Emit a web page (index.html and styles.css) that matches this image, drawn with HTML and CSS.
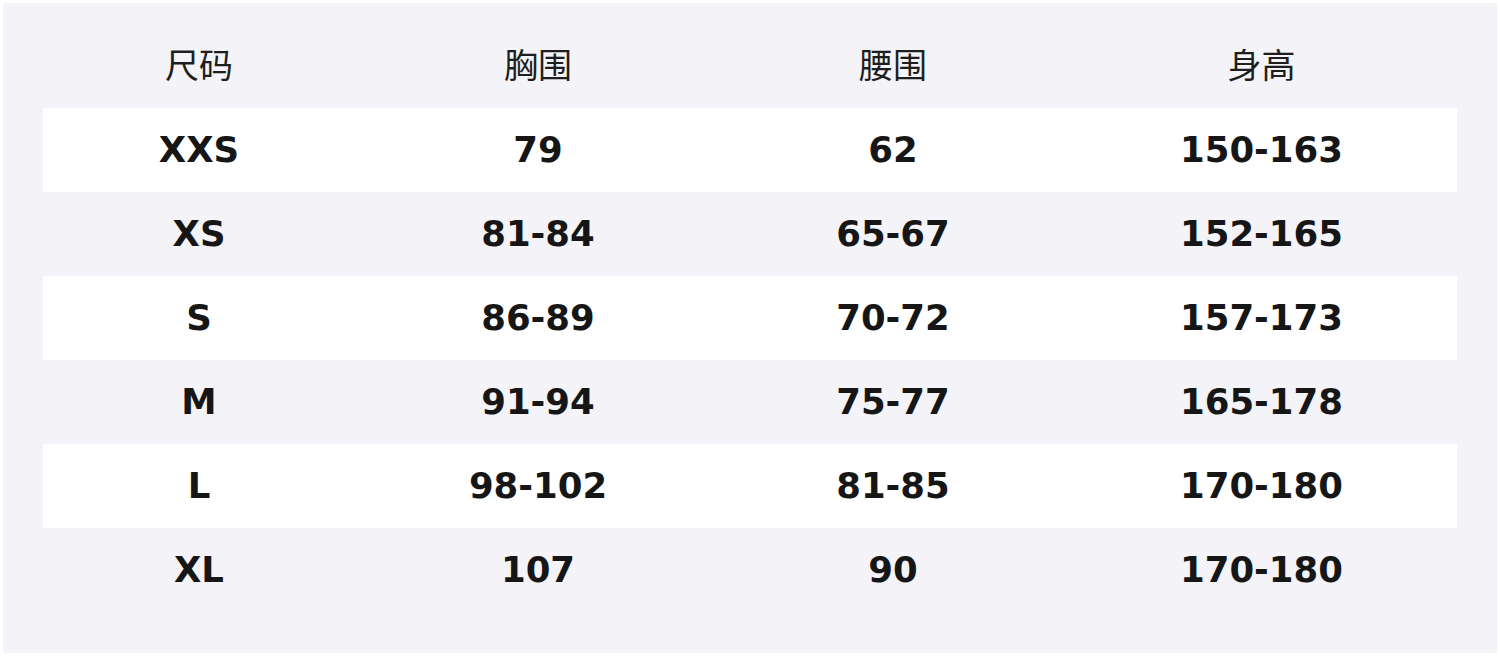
FILE: index.html
```html
<!DOCTYPE html>
<html lang="zh">
<head>
<meta charset="utf-8">
<link rel="stylesheet" href="styles.css">
</head>
<body>
<div class="panel">
  <div class="table">
    <div class="row head"><div>尺码</div><div>胸围</div><div>腰围</div><div>身高</div></div>
    <div class="row alt"><div>XXS</div><div>79</div><div>62</div><div>150-163</div></div>
    <div class="row"><div>XS</div><div>81-84</div><div>65-67</div><div>152-165</div></div>
    <div class="row alt"><div>S</div><div>86-89</div><div>70-72</div><div>157-173</div></div>
    <div class="row"><div>M</div><div>91-94</div><div>75-77</div><div>165-178</div></div>
    <div class="row alt"><div>L</div><div>98-102</div><div>81-85</div><div>170-180</div></div>
    <div class="row"><div>XL</div><div>107</div><div>90</div><div>170-180</div></div>
  </div>
</div>
</body>
</html>
```
FILE: styles.css
```css
html, body { margin: 0; padding: 0; background: #ffffff; }
body { padding: 3px; width: 1500px; height: 656px; box-sizing: border-box; }
.panel {
  background: #f3f3f8;
  height: 650px;
  box-sizing: border-box;
  padding: 21px 40px 41px 40px;
}
.table { display: flex; flex-direction: column; }
.row {
  display: grid;
  grid-template-columns: 312px 366px 344px 393px;
  height: 84px;
  align-items: center;
  text-align: center;
  font-family: "DejaVu Sans", sans-serif;
  font-weight: bold;
  font-size: 35.5px;
  color: #161616;
  box-sizing: border-box;
  padding-bottom: 1px;
}
.row.alt { background: #ffffff; }
.row.head {
  font-family: "Noto Sans CJK SC", "Noto Sans", sans-serif;
  font-weight: normal;
  font-size: 34px;
  color: #1e1e1e;
  padding-bottom: 5px;
}
```
